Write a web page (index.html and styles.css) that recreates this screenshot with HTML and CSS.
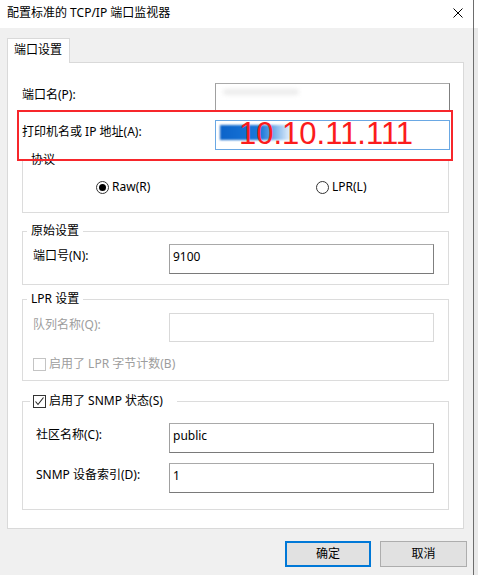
FILE: index.html
```html
<!DOCTYPE html>
<html lang="zh-CN">
<head>
<meta charset="utf-8">
<title>配置标准的 TCP/IP 端口监视器</title>
<link rel="stylesheet" href="styles.css">
</head>
<body>
<div class="screen">
  <div class="window">
    <div class="titlebar">
      <span class="title">配置标准的 TCP/IP 端口监视器</span>
      <svg class="close" width="10" height="10" viewBox="0 0 10 10"><path d="M0.5 0.5 L9.5 9.5 M9.5 0.5 L0.5 9.5" stroke="#000" stroke-width="1" fill="none"/></svg>
    </div>
    <div class="client">
      <div class="tabs"><div class="tab">端口设置</div></div>
      <div class="panel">
        <div class="row">
          <label>端口名(P):</label>
          <div class="input"><span class="smudge"></span></div>
        </div>
        <div class="row ip">
          <label>打印机名或 IP 地址(A):</label>
          <div class="input focus"><span class="sel"></span></div>
        </div>

        <div class="group proto">
          <span class="legend">协议</span>
          <div class="radios">
            <span class="opt"><span class="radio on"></span>Raw(R)</span>
            <span class="opt"><span class="radio"></span>LPR(L)</span>
          </div>
        </div>

        <div class="group raw">
          <span class="legend">原始设置</span>
          <div class="grow">
            <label>端口号(N):</label>
            <div class="input">9100</div>
          </div>
        </div>

        <div class="group lpr">
          <span class="legend">LPR 设置</span>
          <div class="grow disabled">
            <label>队列名称(Q):</label>
            <div class="input off"></div>
          </div>
          <div class="check disabled"><span class="box off"></span>启用了 LPR 字节计数(B)</div>
        </div>

        <div class="group snmp">
          <span class="legend chk"><span class="box"><svg width="11" height="11" viewBox="0 0 11 11"><path d="M1.5 5.5 L4 8.5 L9.5 1.5" stroke="#222" stroke-width="1.1" fill="none"/></svg></span>启用了 SNMP 状态(S)</span>
          <div class="grow">
            <label>社区名称(C):</label>
            <div class="input">public</div>
          </div>
          <div class="grow second">
            <label>SNMP 设备索引(D):</label>
            <div class="input">1</div>
          </div>
        </div>

        <div class="annot-box"></div>
        <div class="annot-text">10.10.11.111</div>
      </div>
      <div class="buttons">
        <div class="btn primary">确定</div>
        <div class="btn cancel">取消</div>
      </div>
    </div>
  </div>
  <div class="edge"></div>
</div>
</body>
</html>
```
FILE: styles.css
```css
body {
  margin: 0;
  background: #f0f0f0;
  font-family: "Noto Sans", "Noto Sans CJK SC", sans-serif;
  font-size: 12px;
  line-height: 16px;
  color: #000;
}

.screen {
  display: flex;
  width: 478px;
  height: 575px;
  overflow: hidden;
}

.window {
  flex: none;
  width: 473px;
  height: 575px;
  border-right: 1px solid #6d6d6d;
  background: #f0f0f0;
}

.edge {
  flex: 1;
  background: linear-gradient(#ffffff 0 28px, #e9e9e9 28px);
}

.titlebar {
  height: 28px;
  box-sizing: border-box;
  background: #fff;
  display: flex;
  align-items: center;
  justify-content: space-between;
  padding: 0 10px 2px 7px;
}

.client {
  padding: 10px 0 0 7px;
}

.tabs {
  display: flex;
  height: 24px;
}

.tab {
  width: 63px;
  height: 25px;
  box-sizing: border-box;
  border: 1px solid #d9d9d9;
  border-bottom: none;
  background: #fff;
  padding: 3px 6px 0;
  position: relative;
  z-index: 1;
}

.panel {
  position: relative;
  width: 457px;
  height: 467px;
  box-sizing: border-box;
  border: 1px solid #d9d9d9;
  background: #fff;
  padding: 20px 0 0 14px;
}

.row {
  display: grid;
  grid-template-columns: 193px 235px;
}

.row label,
.grow label {
  padding-top: 4px;
}

.input {
  height: 29px;
  box-sizing: border-box;
  border: 1px solid;
  border-color: #a9a9a9 #7f7f7f #7a7a7a #a0a0a0;
  background: #fff;
  padding: 4px 3px 0;
}

.row.ip {
  margin-top: 8px;
}

.row.ip .input {
  height: 30px;
  border-color: #6aa8e4;
}

.smudge {
  display: block;
  width: 76px;
  height: 6px;
  margin: 1px 0 0 4px;
  background: #ececec;
  filter: blur(2px);
  border-radius: 3px;
}

.sel {
  display: block;
  width: 74px;
  height: 15px;
  margin: 0 0 0 1px;
  background: linear-gradient(to right, #0b63c9 0%, #1978da 55%, rgba(40, 140, 230, 0) 100%);
  filter: blur(1.2px);
}

.group {
  position: relative;
  width: 427px;
  box-sizing: border-box;
  border: 1px solid #dcdcdc;
}

.legend {
  position: absolute;
  top: -9px;
  left: 4px;
  padding: 0 4px;
  background: #fff;
  line-height: 16px;
}

.proto {
  margin-top: 10px;
  height: 53px;
  padding-top: 18px;
}

.radios {
  display: grid;
  grid-template-columns: 220px auto;
  padding-left: 73px;
}

.opt {
  display: flex;
  align-items: center;
  gap: 3px;
}

.radio {
  position: relative;
  width: 13px;
  height: 13px;
  box-sizing: border-box;
  border: 1px solid #333;
  border-radius: 50%;
  background: #fff;
}

.radio.on::after {
  content: "";
  position: absolute;
  left: 2px;
  top: 2px;
  width: 7px;
  height: 7px;
  border-radius: 50%;
  background: #000;
}

.raw {
  margin-top: 18px;
  height: 54px;
  padding: 12px 0 0 10px;
}

.lpr {
  margin-top: 14px;
  height: 82px;
  padding: 13px 0 0 10px;
}

.snmp {
  margin-top: 20px;
  height: 109px;
  padding: 21px 0 0 13px;
}

.grow {
  display: grid;
  grid-template-columns: 136px 265px;
}

.snmp .grow {
  grid-template-columns: 133px 265px;
}

.grow .input {
  height: 30px;
}

.grow.second {
  margin-top: 10px;
}

.disabled {
  color: #9d9d9d;
}

.input.off {
  height: 29px;
  border-color: #d9d9d9;
}

.check {
  display: flex;
  align-items: center;
  gap: 3px;
  margin-top: 14px;
}

.box {
  display: flex;
  align-items: center;
  justify-content: center;
  width: 13px;
  height: 13px;
  box-sizing: border-box;
  border: 1px solid #333;
  background: #fff;
}

.box.off {
  border-color: #c4c4c4;
}

.legend.chk {
  left: 7px;
  padding: 0 14px 0 3px;
  display: flex;
  align-items: center;
  gap: 3px;
}

.annot-box {
  position: absolute;
  left: 9px;
  top: 47px;
  width: 436px;
  height: 51px;
  box-sizing: border-box;
  border: 2px solid #f7262b;
}

.annot-text {
  position: absolute;
  left: 231px;
  top: 55px;
  font-family: "Liberation Sans", Arial, sans-serif;
  font-size: 31px;
  line-height: 31px;
  color: #fb1c1c;
}

.buttons {
  display: flex;
  justify-content: flex-end;
  gap: 9px;
  margin-top: 12px;
  padding-right: 6px;
}

.btn {
  height: 26px;
  box-sizing: border-box;
  background: #e1e1e1;
  border: 1px solid #adadad;
  display: flex;
  align-items: center;
  justify-content: center;
}

.btn.primary {
  width: 86px;
  border: 2px solid #0078d7;
}

.btn.cancel {
  width: 87px;
}
```
